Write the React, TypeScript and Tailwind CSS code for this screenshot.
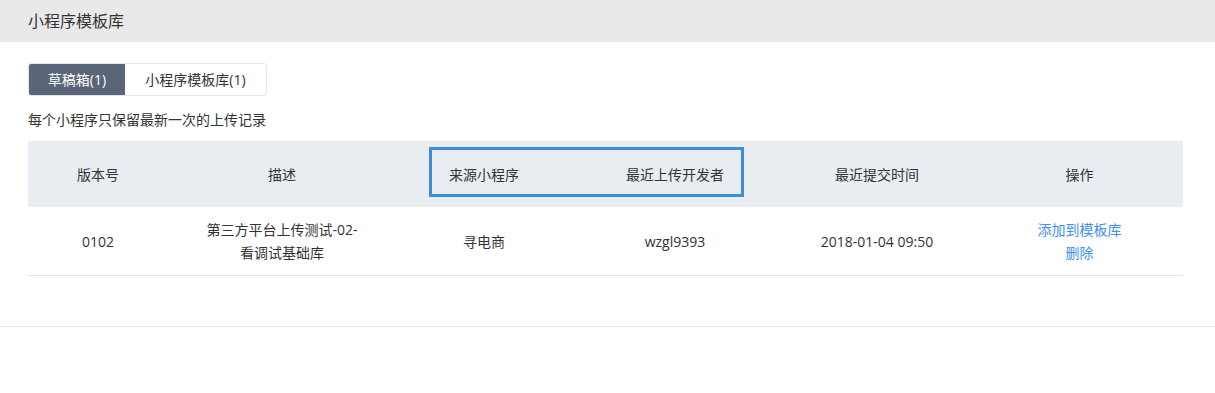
import React from "react";

const font = { fontFamily: '"Open Sans", "Noto Sans CJK SC", sans-serif' };

const cols = ["w-[140px]", "w-[228px]", "w-[176px]", "w-[206px]", "w-[198px]", "w-[207px]"];
const heads = ["版本号", "描述", "来源小程序", "最近上传开发者", "最近提交时间", "操作"];

export default function App() {
  return (
    <div className="w-[1215px] h-[393px] bg-white text-[#333]" style={font}>
      {/* Title bar */}
      <div className="h-[42px] bg-[#e9e9e9] flex items-center px-[28px] text-[16px]">小程序模板库</div>

      <div className="px-[28px] pt-[21px] border-b border-[#e5e5e5] pb-[50px]">
        {/* Tabs */}
        <div className="flex w-[239px] h-[33px] border border-[#e3e5e9] rounded-[3px] overflow-hidden text-[14px]">
          <div className="w-[96px] bg-[#5a6579] text-white flex items-center justify-center">草稿箱(1)</div>
          <div className="flex-1 flex items-center justify-center">小程序模板库(1)</div>
        </div>

        <p className="mt-[14px] text-[14px] leading-[20px]">每个小程序只保留最新一次的上传记录</p>

        {/* Table */}
        <div className="mt-[11px] w-[1155px] text-[14px] relative">
          <div className="flex h-[66px] bg-[#e9ecf0] items-center">
            {heads.map((h, i) => (
              <div key={h} className={`${cols[i]} text-center`}>{h}</div>
            ))}
          </div>
          <div className="absolute left-[401px] top-[6px] w-[315px] h-[50px] border-[3px] border-[#3c8fdf]" />
          <div className="flex h-[69px] items-center border-b border-[#e5e5e5] leading-[23px]">
            <div className={`${cols[0]} text-center`}>0102</div>
            <div className={`${cols[1]} text-center`}>
              <div>第三方平台上传测试-02-</div>
              <div>看调试基础库</div>
            </div>
            <div className={`${cols[2]} text-center`}>寻电商</div>
            <div className={`${cols[3]} text-center`}>wzgl9393</div>
            <div className={`${cols[4]} text-center`}>2018-01-04 09:50</div>
            <div className={`${cols[5]} text-center text-[#3d8ff0]`}>
              <div>添加到模板库</div>
              <div>删除</div>
            </div>
          </div>
        </div>
      </div>
    </div>
  );
}
